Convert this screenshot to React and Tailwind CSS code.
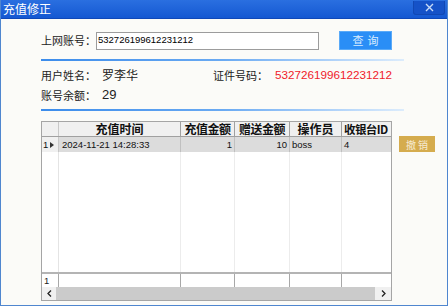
import React from "react";

const cols = "grid-cols-[17px_122px_54px_55px_52px_50px]";
const cjk = { fontFamily: '"Noto Sans CJK SC", "Liberation Sans", sans-serif' };
const lat = { fontFamily: '"Liberation Sans", sans-serif' };

export default function App() {
  return (
    <div className="w-[448px] h-[306px] bg-[#fbfbf8] relative overflow-hidden border-x border-b border-[#4f86cf] flex flex-col" style={cjk}>
      {/* title bar */}
      <div className="h-[19px] shrink-0 bg-gradient-to-b from-[#2a6fe0] to-[#1458d2] border-b border-[#0f48b8] flex items-center justify-between pl-[2px] pr-[2px]">
        <span className="text-white text-[12px] leading-none">充值修正</span>
        <div className="w-[32px] h-[14px] mt-[-3px] bg-[#1552c8] rounded-b-[3px] border border-t-0 border-[#1148b4] flex items-center justify-center">
          <svg width="9" height="9" viewBox="0 0 9 9"><path d="M1 1L8 8M8 1L1 8" stroke="#c9dbf7" strokeWidth="1.4" /></svg>
        </div>
      </div>

      <div className="pl-[40px] flex flex-col">
        {/* account row */}
        <div className="flex items-center mt-[12px] h-[19px]">
          <span className="text-[11px] text-[#222] w-[55px] whitespace-nowrap">上网账号：</span>
          <div className="w-[223px] h-[18px] border border-[#9c9c9c] bg-white flex items-center pl-[1px]">
            <span className="text-[9.5px] text-black" style={lat}>532726199612231212</span>
          </div>
          <div className="ml-[20px] w-[53px] h-[19px] bg-[#2a8ef6] border border-[#5aaaf8] flex items-center justify-center">
            <span className="text-[11px] text-[#d8ecff] tracking-[4px] pl-[4px]">查询</span>
          </div>
        </div>

        <div className="mt-[9px] h-[2px] w-[363px] bg-gradient-to-r from-[#3b8ceb] via-[#6aaaf2] to-[#dcecfc]" />

        {/* info rows */}
        <div className="flex items-center mt-[4px] h-[20px] text-[#222] whitespace-nowrap">
          <span className="w-[61px] text-[11px]">用户姓名：</span>
          <span className="w-[111px] text-[12px]">罗李华</span>
          <span className="w-[62px] text-[11px]">证件号码：</span>
          <span className="text-[#f0202a] text-[11.7px]" style={lat}>532726199612231212</span>
        </div>
        <div className="flex items-center h-[20px] text-[#222] whitespace-nowrap">
          <span className="w-[61px] text-[11px]">账号余额：</span>
          <span className="text-[13px]" style={lat}>29</span>
        </div>

        <div className="mt-[4px] h-[2px] w-[363px] bg-gradient-to-r from-[#3b8ceb] via-[#6aaaf2] to-[#dcecfc]" />

        {/* grid + button */}
        <div className="flex mt-[10px] items-start">
          <div className="w-[351px] h-[180px] border border-[#a5a5a5] bg-white flex flex-col">
            {/* header */}
            <div className={`grid ${cols} h-[15px] bg-[#f0f0f0] border-b border-[#a0a0a0] text-[12px] font-bold text-[#111] leading-[14px] whitespace-nowrap`}>
              <div className="border-r border-[#c8c8c8]" />
              <div className="border-r border-[#a0a0a0] text-center">充值时间</div>
              <div className="border-r border-[#a0a0a0] text-center tracking-[-0.5px]">充值金额</div>
              <div className="border-r border-[#a0a0a0] text-center tracking-[-0.5px]">赠送金额</div>
              <div className="border-r border-[#a0a0a0] text-center">操作员</div>
              <div className="pl-[2px] overflow-hidden tracking-[-0.6px] text-[11.5px]">收银台ID</div>
            </div>
            {/* row 1 */}
            <div className={`grid ${cols} h-[15px] bg-[#dcdcdc] text-[9.5px] text-[#111] leading-[15px]`} style={lat}>
              <div className="bg-[#f0f0f0] border-r border-[#c8c8c8] flex items-center pl-[1px] gap-[2px]">
                <span>1</span>
                <svg width="4" height="6" viewBox="0 0 4 6"><path d="M0 0L4 3L0 6Z" fill="#333" /></svg>
              </div>
              <div className="border-r border-[#c0c0c0] pl-[3px]">2024-11-21 14:28:33</div>
              <div className="border-r border-[#c0c0c0] text-right pr-[2px]">1</div>
              <div className="border-r border-[#c0c0c0] text-right pr-[2px]">10</div>
              <div className="border-r border-[#c0c0c0] pl-[2px]">boss</div>
              <div className="pl-[2px]">4</div>
            </div>
            {/* empty body */}
            <div className={`grid ${cols} flex-1`}>
              <div className="bg-white border-r border-[#e4e4e4]" />
              <div className="border-r border-[#ececec]" />
              <div className="border-r border-[#ececec]" />
              <div className="border-r border-[#ececec]" />
              <div className="border-r border-[#ececec]" />
              <div />
            </div>
            {/* footer row */}
            <div className={`grid ${cols} h-[15px] border-t-2 border-[#b4b4b4] text-[9.5px] text-[#222] leading-[13px]`} style={lat}>
              <div className="border-r border-[#a8a8a8] pl-[2px]">1</div>
              <div className="border-r border-[#a8a8a8]" />
              <div className="border-r border-[#a8a8a8]" />
              <div className="border-r border-[#a8a8a8]" />
              <div className="border-r border-[#a8a8a8]" />
              <div />
            </div>
            {/* scrollbar */}
            <div className="h-[13px] flex bg-[#cbcbcb]">
              <div className="w-[14px] bg-[#f0f0f0] flex items-center justify-center">
                <svg width="5" height="7" viewBox="0 0 5 7"><path d="M4 0.5L1 3.5L4 6.5" stroke="#222" strokeWidth="1.3" fill="none" /></svg>
              </div>
              <div className="flex-1" />
              <div className="w-[16px] bg-[#f0f0f0] flex items-center justify-center">
                <svg width="5" height="7" viewBox="0 0 5 7"><path d="M1 0.5L4 3.5L1 6.5" stroke="#222" strokeWidth="1.3" fill="none" /></svg>
              </div>
            </div>
          </div>
          <div className="ml-[7px] mt-[15px] w-[36px] h-[16px] bg-[#d5ac4e] flex items-center justify-center">
            <span className="text-[10px] text-[#f6ead0] tracking-[2px] pl-[2px]">撤销</span>
          </div>
        </div>
      </div>
    </div>
  );
}
